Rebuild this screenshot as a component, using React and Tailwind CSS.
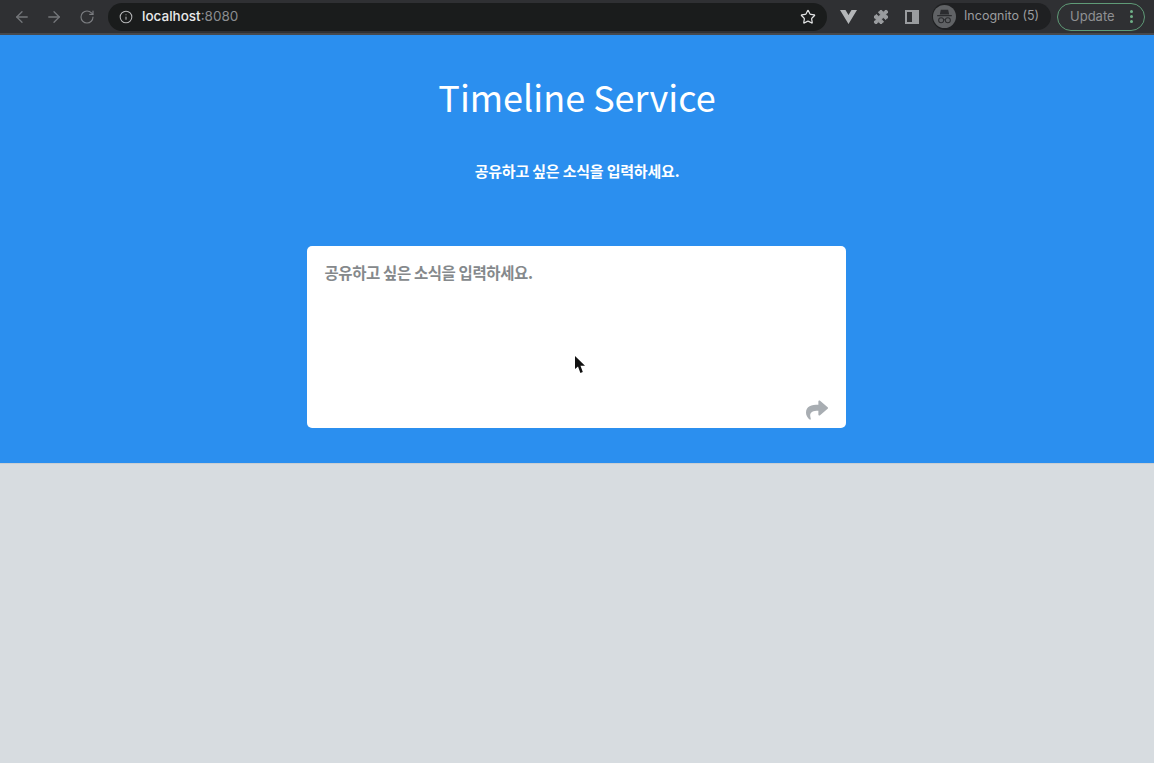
import { ArrowLeft, ArrowRight, RotateCw, Info, Star, Puzzle } from 'lucide-react'
import { FaShare } from 'react-icons/fa'

const KR = "font-['Noto_Sans_CJK_KR',sans-serif]"

const IncognitoIcon = () => (
  <svg width="23" height="23" viewBox="0 0 22 22" className="rounded-full bg-[#606265]">
    <path d="M7.5 4.5h7l1 4.5h-9z M4 9.5h14v1.2H4z" fill="#2b2c2f" />
    <circle cx="7.8" cy="14.5" r="2.4" fill="none" stroke="#2b2c2f" strokeWidth="1" />
    <circle cx="14.2" cy="14.5" r="2.4" fill="none" stroke="#2b2c2f" strokeWidth="1" />
    <path d="M10.2 14.2h1.6" stroke="#2b2c2f" strokeWidth="1" />
  </svg>
)

const BrowserBar = () => (
  <div className="flex h-[35px] shrink-0 items-center border-b-2 border-b-[#47494d] bg-[#2f3033] pl-[13px] pr-[9px] font-['Inter',sans-serif]">
    <ArrowLeft size={18} strokeWidth={1.7} className="text-[#75777b]" />
    <ArrowRight size={18} strokeWidth={1.7} className="ml-[14px] text-[#75777b]" />
    <RotateCw size={16} strokeWidth={1.7} className="ml-[16px] text-[#7b7d81]" />
    <div className="ml-[13px] flex h-[28px] w-[719px] items-center rounded-full bg-[#1a1c1c] pl-[11px] pr-[11px]">
      <Info size={14} strokeWidth={1.8} className="text-[#b5b6b8]" />
      <span className="ml-[9px] text-[13.5px] font-medium text-[#e8e9ea]">localhost<span className="font-normal text-[#8b8d90]">:8080</span></span>
      <Star size={16} strokeWidth={1.8} className="ml-auto text-[#e3e4e5]" />
    </div>
    <svg width="17" height="14" viewBox="0 0 17 14" className="ml-[13px]">
      <path d="M0 0h5.5l3 5 3-5H17L8.5 14z" fill="#b4b6b8" />
    </svg>
    <Puzzle size={16} strokeWidth={1.5} className="ml-[16px] fill-[#9a9c9f] text-[#9a9c9f]" />
    <div className="ml-[16px] flex h-[14px] w-[14px] justify-end border-2 border-[#9a9c9f]">
      <div className="h-full w-[5px] bg-[#9a9c9f]" />
    </div>
    <div className="ml-[13px] flex h-[27px] w-[119px] items-center rounded-full bg-[#1f2022] pl-[1px]">
      <IncognitoIcon />
      <span className="ml-[8px] whitespace-nowrap text-[12.5px] text-[#9b9d9f]">Incognito (5)</span>
    </div>
    <div className="ml-[6px] flex h-[28px] w-[88px] items-center rounded-full border border-[#5f9b77] pl-[12px]">
      <span className="text-[13px] text-[#8f9193]">Update</span>
      <div className="ml-auto mr-[11px] flex flex-col gap-[2px]">
        <div className="h-[3px] w-[3px] rounded-full bg-[#6fb088]" />
        <div className="h-[3px] w-[3px] rounded-full bg-[#6fb088]" />
        <div className="h-[3px] w-[3px] rounded-full bg-[#6fb088]" />
      </div>
    </div>
  </div>
)

export default function App() {
  return (
    <div className="relative flex h-[763px] flex-col overflow-hidden bg-[#d7dce0]">
      <BrowserBar />
      <div className={`flex h-[429px] shrink-0 flex-col items-center border-b border-b-[#c9ced2] bg-[#2b8fef] ${KR}`}>
        <h1 className="mt-[31px] text-[36px] leading-[60px] text-white">Timeline Service</h1>
        <p className="mt-[33px] text-[15px] font-bold leading-[24px] tracking-[-0.2px] text-white">공유하고 싶은 소식을 입력하세요.</p>
        <div className="mr-[2px] mt-[63px] flex h-[182px] w-[539px] flex-col rounded-[5px] bg-white px-[18px] pb-[7px] pt-[14px]">
          <span className="text-[15.5px] font-bold leading-[24px] tracking-[-0.4px] text-[#85898c]">공유하고 싶은 소식을 입력하세요.</span>
          <FaShare size={22} className="ml-auto mt-auto text-[#a8adb2]" />
        </div>
      </div>
      {/* mouse cursor */}
      <svg width="12" height="18" viewBox="0 0 12 18" className="absolute left-[574px] top-[356px]">
        <path d="M1 0v13l3-2.6L6.4 17l2.4-1L6.5 9.8H11z" fill="#111" />
      </svg>
    </div>
  )
}
